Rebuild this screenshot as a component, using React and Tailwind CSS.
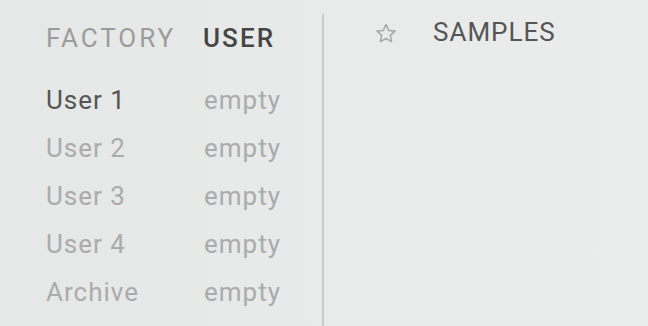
const rows = [
  { name: "User 1", value: "empty", active: true },
  { name: "User 2", value: "empty" },
  { name: "User 3", value: "empty" },
  { name: "User 4", value: "empty" },
  { name: "Archive", value: "empty" },
];

function StarIcon() {
  return (
    <svg width="22" height="21" viewBox="0 0 22 21" fill="none" stroke="#a6a6a6" strokeWidth="1.5" strokeLinejoin="round">
      <path d="M11 1.5l2.7 5.9 6.3.7-4.7 4.3 1.3 6.3L11 15.5l-5.6 3.2 1.3-6.3L2 8.1l6.3-.7z" />
    </svg>
  );
}

export default function App() {
  return (
    <div
      className="flex h-[326px] w-[648px] overflow-hidden bg-gradient-to-r from-[#e6e7e7] to-[#ebecec] text-[26px] leading-[48px] tracking-[1px]"
      style={{ fontFamily: "Roboto, 'Liberation Sans', sans-serif" }}
    >
      <div className="w-[322px] shrink-0 pl-[46px] pt-[14px]">
        <div className="flex">
          <div className="w-[157px] tracking-[2.9px] text-[#9c9c9c]">FACTORY</div>
          <div className="font-medium tracking-[2.1px] text-[#454545]">USER</div>
        </div>
        <div className="mt-[14px]">
          {rows.map((row) => (
            <div key={row.name} className="flex">
              <div className={`w-[158px] ${row.active ? "text-[#555555]" : "text-[#ababab]"}`}>{row.name}</div>
              <div className="text-[#ababab]">{row.value}</div>
            </div>
          ))}
        </div>
      </div>
      <div className="mt-[14px] w-[2px] shrink-0 bg-[#cbcccc]" />
      <div className="flex items-start pl-[51px] pt-[9px]">
        <div className="flex h-[48px] w-[58px] items-center">
          <StarIcon />
        </div>
        <div className="-mt-px text-[#555555]">SAMPLES</div>
      </div>
    </div>
  );
}
